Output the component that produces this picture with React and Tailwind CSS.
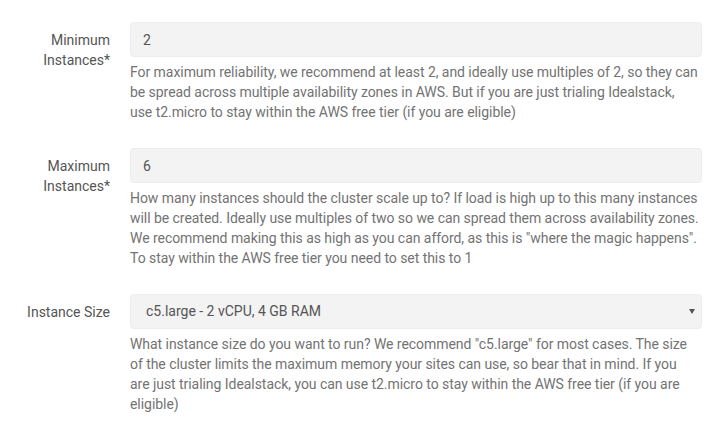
import { useState } from "react"

function Row({ label, children, lines }) {
    return (
        <div className="flex gap-[20px] mb-[26px]">
            <label className="w-[110px] shrink-0 text-right pt-[8px] leading-5 text-[14px] text-[#555]">{label}</label>
            <div className="flex-1 min-w-0 flex flex-col gap-[5px]">
                {children}
                <p className="text-[14px] leading-5 text-[#737373] tracking-[-0.05px]">
                    {lines.map((l, i) => (
                        <span key={i} className="block whitespace-nowrap">{l}</span>
                    ))}
                </p>
            </div>
        </div>
    )
}

export default function App(){
    const [min, setMin] = useState("2")
    const [max, setMax] = useState("6")
    const [size, setSize] = useState("c5.large")

    return(
        <div className="bg-white min-h-[428px] pt-[22px] pr-[14px] font-['Roboto',sans-serif]">
            <Row
                label={<>Minimum<br/>Instances*</>}
                lines={[
                    "For maximum reliability, we recommend at least 2, and ideally use multiples of 2, so they can",
                    "be spread across multiple availability zones in AWS. But if you are just trialing Idealstack,",
                    "use t2.micro to stay within the AWS free tier (if you are eligible)",
                ]}
            >
                <input value={min} onChange={(e)=>setMin(e.target.value)} className="h-[35px] w-full rounded-[4px] border border-[#ededed] bg-[#f3f3f3] px-[12px] text-[14px] text-[#555] outline-none"/>
            </Row>

            <Row
                label={<>Maximum<br/>Instances*</>}
                lines={[
                    "How many instances should the cluster scale up to? If load is high up to this many instances",
                    "will be created. Ideally use multiples of two so we can spread them across availability zones.",
                    `We recommend making this as high as you can afford, as this is "where the magic happens".`,
                    "To stay within the AWS free tier you need to set this to 1",
                ]}
            >
                <input value={max} onChange={(e)=>setMax(e.target.value)} className="h-[35px] w-full rounded-[4px] border border-[#ededed] bg-[#f3f3f3] px-[12px] text-[14px] text-[#555] outline-none"/>
            </Row>

            <Row
                label="Instance Size"
                lines={[
                    `What instance size do you want to run? We recommend "c5.large" for most cases. The size`,
                    "of the cluster limits the maximum memory your sites can use, so bear that in mind. If you",
                    "are just trialing Idealstack, you can use t2.micro to stay within the AWS free tier (if you are",
                    "eligible)",
                ]}
            >
                <div className="relative">
                    <select value={size} onChange={(e)=>setSize(e.target.value)} className="appearance-none h-[35px] w-full rounded-[4px] border border-[#ededed] bg-[#f3f3f3] pl-[15px] pr-8 text-[14px] text-[#555] outline-none">
                        <option value="c5.large">c5.large - 2 vCPU, 4 GB RAM</option>
                        <option value="t2.micro">t2.micro - 1 vCPU, 1 GB RAM</option>
                    </select>
                    <span className="pointer-events-none absolute right-[7px] top-[15px] w-0 h-0 border-l-[3px] border-r-[3px] border-t-[5px] border-l-transparent border-r-transparent border-t-[#555]"></span>
                </div>
            </Row>
        </div>
    )
}
